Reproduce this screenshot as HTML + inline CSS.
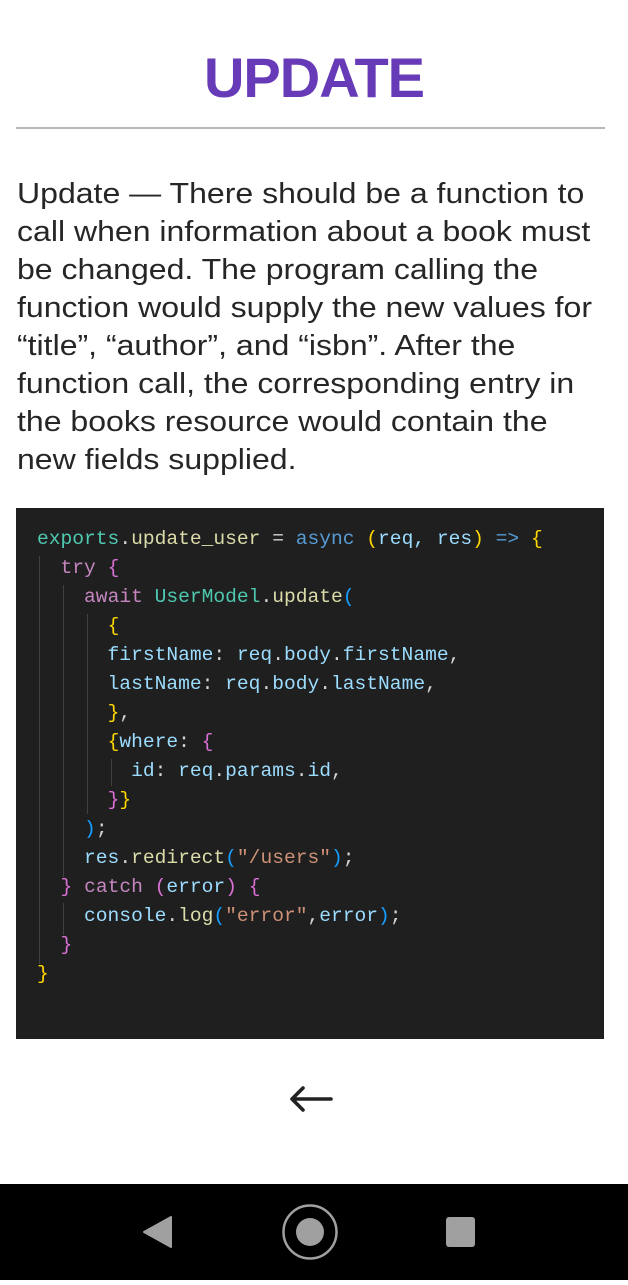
<!DOCTYPE html>
<html><head><meta charset="utf-8"><style>
body{margin:0;width:628px;height:1280px;background:#fff;position:relative;overflow:hidden;font-family:"Liberation Sans",sans-serif}
h1{position:absolute;top:45px;left:0;width:628px;text-align:center;margin:0;font-size:56px;line-height:66px;color:#673ab7;font-weight:bold;letter-spacing:-1px}
.hr{position:absolute;top:127px;left:16px;width:589px;height:2px;background:#b8b8b8}
p{position:absolute;top:175px;left:17px;margin:0;font-size:28.6px;line-height:38px;color:#262626;white-space:nowrap;transform:scaleX(1.12);transform-origin:0 0}
.code{position:absolute;top:508px;left:16px;width:588px;height:531px;background:#1f1f1f}
pre{position:absolute;top:525px;left:37px;margin:0;font-family:"Liberation Mono",monospace;font-size:19.6px;line-height:29px;color:#9cdcfe}
.g{position:absolute;width:1px;background:#404040}
.k{color:#c586c0}.b{color:#569cd6}.y{color:#ffd700}.f{color:#dcdcaa}.t{color:#4ec9b0}.s{color:#ce9178}.w{color:#d4d4d4}.p{color:#da70d6}.c{color:#179fff}
.nav{position:absolute;top:1184px;left:0;width:628px;height:96px;background:#000}
</style></head><body>
<h1>UPDATE</h1>
<div class="hr"></div>
<p>Update — There should be a function to<br>call when information about a book must<br>be changed. The program calling the<br>function would supply the new values for<br>“title”, “author”, and “isbn”. After the<br>function call, the corresponding entry in<br>the books resource would contain the<br>new fields supplied.</p>
<div class="code"></div>
<div class="g" style="left:39px;top:556px;height:408px"></div>
<div class="g" style="left:63px;top:585px;height:292px"></div>
<div class="g" style="left:63px;top:903px;height:32px"></div>
<div class="g" style="left:87px;top:614px;height:200px"></div>
<div class="g" style="left:111px;top:759px;height:27px"></div>
<pre><span class="t">exports</span><span class="w">.</span><span class="f">update_user</span> <span class="w">=</span> <span class="b">async</span> <span class="y">(</span>req, res<span class="y">)</span> <span class="b">=&gt;</span> <span class="y">{</span>
  <span class="k">try</span> <span class="p">{</span>
    <span class="k">await</span> <span class="t">UserModel</span><span class="w">.</span><span class="f">update</span><span class="c">(</span>
      <span class="y">{</span>
      firstName<span class="w">:</span> req<span class="w">.</span>body<span class="w">.</span>firstName<span class="w">,</span>
      lastName<span class="w">:</span> req<span class="w">.</span>body<span class="w">.</span>lastName<span class="w">,</span>
      <span class="y">}</span><span class="w">,</span>
      <span class="y">{</span>where<span class="w">:</span> <span class="p">{</span>
        id<span class="w">:</span> req<span class="w">.</span>params<span class="w">.</span>id<span class="w">,</span>
      <span class="p">}</span><span class="y">}</span>
    <span class="c">)</span><span class="w">;</span>
    res<span class="w">.</span><span class="f">redirect</span><span class="c">(</span><span class="s">"/users"</span><span class="c">)</span><span class="w">;</span>
  <span class="p">}</span> <span class="k">catch</span> <span class="p">(</span>error<span class="p">)</span> <span class="p">{</span>
    console<span class="w">.</span><span class="f">log</span><span class="c">(</span><span class="s">"error"</span><span class="w">,</span>error<span class="c">)</span><span class="w">;</span>
  <span class="p">}</span>
<span class="y">}</span></pre>
<svg style="position:absolute;left:285px;top:1082px" width="52" height="36"><path d="M7 17H46M7 17L18 6M7 17L18 28" stroke="#222" stroke-width="3.6" fill="none" stroke-linecap="round" stroke-linejoin="round"/></svg>
<div class="nav">
<svg width="628" height="96"><path d="M144 48L171 33V63Z" fill="#a0a0a0" stroke="#a0a0a0" stroke-width="2" stroke-linejoin="round"/><circle cx="310" cy="48" r="26.5" stroke="#a0a0a0" stroke-width="2.5" fill="none"/><circle cx="310" cy="48" r="14" fill="#a0a0a0"/><rect x="446" y="33" width="29" height="30" rx="3" fill="#a0a0a0"/></svg>
</div>
</body></html>
